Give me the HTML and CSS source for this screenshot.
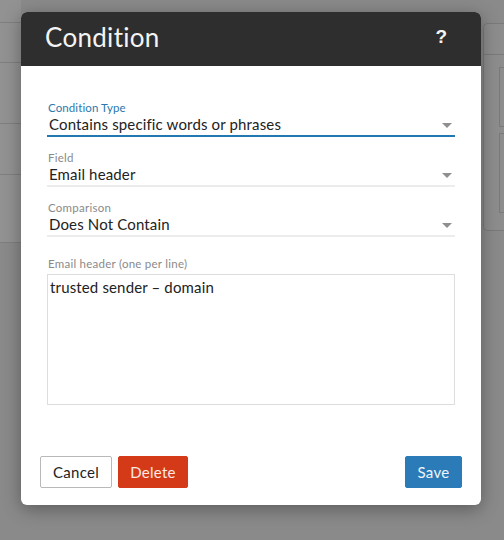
FILE: index.html
```html
<!DOCTYPE html>
<html>
<head>
<meta charset="utf-8">
<link rel="stylesheet" href="styles.css">
</head>
<body>
<div class="page">
  <div class="left-panel">
    <div class="lrow r1"></div>
    <div class="lrow r2"></div>
    <div class="lrow r3"></div>
    <div class="lrow r4"></div>
    <div class="lrow r5"></div>
  </div>
  <div class="spacer"></div>
  <div class="right-card">
    <div class="rc-head"></div>
    <div class="rc-box b1"></div>
    <div class="rc-box b2"></div>
  </div>
</div>

<div class="dialog">
  <div class="header">
    <div class="title">Condition</div>
    <div class="help">?</div>
  </div>
  <div class="body">
    <div class="field active">
      <div class="label">Condition Type</div>
      <div class="select"><span>Contains specific words or phrases</span><i class="caret"></i></div>
    </div>
    <div class="field">
      <div class="label">Field</div>
      <div class="select"><span>Email header</span><i class="caret"></i></div>
    </div>
    <div class="field">
      <div class="label">Comparison</div>
      <div class="select"><span>Does Not Contain</span><i class="caret"></i></div>
    </div>
    <div class="field area-field">
      <div class="label">Email header (one per line)</div>
      <div class="textarea">trusted sender – domain</div>
    </div>
  </div>
  <div class="footer">
    <button class="btn cancel">Cancel</button>
    <button class="btn delete">Delete</button>
    <div class="grow"></div>
    <button class="btn save">Save</button>
  </div>
</div>
</body>
</html>
```

FILE: styles.css
```css
html, body {
  margin: 0;
  padding: 0;
}
body {
  width: 504px;
  height: 540px;
  background: #8a8a8a;
  font-family: Lato, "Open Sans", sans-serif;
  overflow: hidden;
  position: relative;
}
.page {
  display: flex;
  height: 540px;
}
.left-panel {
  width: 21px;
  height: 242px;
  background: #929292;
  display: flex;
  flex-direction: column;
  border-bottom: 1px solid #7e7e7e;
}
.lrow {
  border-bottom: 1px solid #7f7f7f;
}
.r1 { height: 22px; }
.r2 { height: 39px; }
.r3 { height: 60px; }
.r4 { height: 50px; }
.r5 { flex: 1; border-bottom: none; }
.spacer { flex: 1; }
.right-card {
  margin-top: 23px;
  width: 20px;
  height: 206px;
  border: 1px solid #7a7a7a;
  border-right: none;
  border-radius: 5px 0 0 5px;
  background: #8d8d8d;
  display: flex;
  flex-direction: column;
  align-items: flex-end;
}
.rc-head {
  align-self: stretch;
  height: 30px;
  border-bottom: 1px solid #7a7a7a;
}
.rc-box {
  width: 4px;
  border: 1px solid #7a7a7a;
  border-right: none;
  margin-top: 12px;
}
.b1 { height: 58px; }
.b2 { height: 78px; margin-top: 6px; }

.dialog {
  position: absolute;
  left: 21px;
  top: 12px;
  width: 460px;
  height: 493px;
  background: #fff;
  border-radius: 6px;
  overflow: hidden;
  box-shadow: 0 4px 18px rgba(0, 0, 0, 0.35);
  display: flex;
  flex-direction: column;
}
.header {
  height: 54px;
  background: #2e2e2e;
  display: flex;
  align-items: center;
  padding: 0 34px 0 24px;
  color: #f4f4f4;
}
.title {
  font-size: 26px;
  flex: 1;
  letter-spacing: 0.3px;
  padding-bottom: 4px;
}
.help {
  font-family: "Liberation Sans", Arial, sans-serif;
  font-weight: bold;
  font-size: 19px;
  padding-bottom: 4px;
}
.body {
  padding: 35px 26px 0 26px;
  flex: 1;
}
.field {
  margin-bottom: 14px;
}
.label {
  font-size: 11.5px;
  line-height: 14px;
  color: #8a8a8a;
  padding-left: 1px;
  letter-spacing: 0.25px;
}
.field.active .label {
  color: #2a78ad;
  letter-spacing: 0.1px;
}
.select {
  height: 20px;
  display: flex;
  align-items: center;
  font-size: 15px;
  color: #222;
  padding-left: 2px;
  border-bottom: 2px solid #ececec;
  letter-spacing: 0.15px;
}
.field.active .select {
  border-bottom-color: #2279b1;
}
.select span {
  flex: 1;
  padding-bottom: 3px;
}
.caret {
  width: 0;
  height: 0;
  border-left: 5px solid transparent;
  border-right: 5px solid transparent;
  border-top: 5px solid #8f8f8f;
  margin-right: 3px;
  margin-top: 0px;
}
.area-field {
  margin-top: 20px;
}
.area-field .label {
  margin-bottom: 3px;
}
.textarea {
  height: 125px;
  border: 1px solid #dddddd;
  padding: 2px 3px 2px 2px;
  font-size: 15px;
  line-height: 20px;
  color: #222;
  letter-spacing: 0.15px;
}
.footer {
  display: flex;
  padding: 0 19px 17px 19px;
  gap: 6px;
}
.grow { flex: 1; }
.btn {
  height: 32px;
  font-family: Lato, "Open Sans", sans-serif;
  font-size: 15px;
  border-radius: 2px;
  padding: 0;
  letter-spacing: 0.3px;
}
.cancel {
  width: 72px;
  background: #fff;
  border: 1px solid #b9b9b9;
  color: #222;
}
.delete {
  width: 70px;
  background: #d43a17;
  border: 1px solid #d43a17;
  color: #fbe9e4;
}
.save {
  width: 57px;
  background: #2b7bb8;
  border: 1px solid #2b7bb8;
  color: #eef5fb;
}
```
